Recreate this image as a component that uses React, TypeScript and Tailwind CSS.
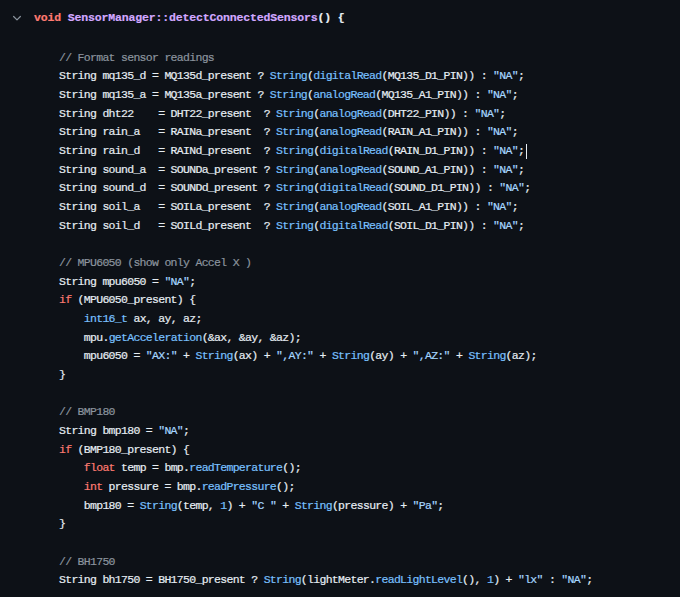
import React from "react";

type Seg = [string, string?];

const C = {
    kw: "text-[#ff7b72]",
    fn: "text-[#79c0ff]",
    str: "text-[#a5d6ff]",
    cm: "text-[#8b949e]",
    def: "text-[#d2a8ff]",
};

// helper: ternary sensor line
const sensorLine = (name: string, flag: string, read: string, pin: string): Seg[] => [
    [`String ${name}= ${flag}? `],
    ["String", C.fn],
    ["("],
    [read, C.fn],
    [`(${pin})) : `],
    ['"NA"', C.str],
    [";"],
];

const lines: { indent: number; segs: Seg[]; cursor?: boolean }[] = [
    { indent: 0, segs: [["// Format sensor readings", C.cm]] },
    { indent: 0, segs: sensorLine("mq135_d ", "MQ135d_present ", "digitalRead", "MQ135_D1_PIN") },
    { indent: 0, segs: sensorLine("mq135_a ", "MQ135a_present ", "analogRead", "MQ135_A1_PIN") },
    { indent: 0, segs: sensorLine("dht22    ", "DHT22_present  ", "analogRead", "DHT22_PIN") },
    { indent: 0, segs: sensorLine("rain_a   ", "RAINa_present  ", "analogRead", "RAIN_A1_PIN") },
    { indent: 0, segs: sensorLine("rain_d   ", "RAINd_present  ", "digitalRead", "RAIN_D1_PIN"), cursor: true },
    { indent: 0, segs: sensorLine("sound_a  ", "SOUNDa_present ", "analogRead", "SOUND_A1_PIN") },
    { indent: 0, segs: sensorLine("sound_d  ", "SOUNDd_present ", "digitalRead", "SOUND_D1_PIN") },
    { indent: 0, segs: sensorLine("soil_a   ", "SOILa_present  ", "analogRead", "SOIL_A1_PIN") },
    { indent: 0, segs: sensorLine("soil_d   ", "SOILd_present  ", "digitalRead", "SOIL_D1_PIN") },
    { indent: 0, segs: [] },
    { indent: 0, segs: [["// MPU6050 (show only Accel X )", C.cm]] },
    { indent: 0, segs: [["String mpu6050 = "], ['"NA"', C.str], [";"]] },
    { indent: 0, segs: [["if", C.kw], [" (MPU6050_present) {"]] },
    { indent: 1, segs: [["int16_t", C.fn], [" ax, ay, az;"]] },
    { indent: 1, segs: [["mpu."], ["getAcceleration", C.fn], ["(&ax, &ay, &az);"]] },
    {
        indent: 1,
        segs: [
            ["mpu6050 = "], ['"AX:"', C.str], [" + "], ["String", C.fn], ["(ax) + "],
            ['",AY:"', C.str], [" + "], ["String", C.fn], ["(ay) + "],
            ['",AZ:"', C.str], [" + "], ["String", C.fn], ["(az);"],
        ],
    },
    { indent: 0, segs: [["}"]] },
    { indent: 0, segs: [] },
    { indent: 0, segs: [["// BMP180", C.cm]] },
    { indent: 0, segs: [["String bmp180 = "], ['"NA"', C.str], [";"]] },
    { indent: 0, segs: [["if", C.kw], [" (BMP180_present) {"]] },
    { indent: 1, segs: [["float", C.kw], [" temp = bmp."], ["readTemperature", C.fn], ["();"]] },
    { indent: 1, segs: [["int", C.kw], [" pressure = bmp."], ["readPressure", C.fn], ["();"]] },
    {
        indent: 1,
        segs: [
            ["bmp180 = "], ["String", C.fn], ["(temp, "], ["1", C.fn], [") + "],
            ['"C "', C.str], [" + "], ["String", C.fn], ["(pressure) + "], ['"Pa"', C.str], [";"],
        ],
    },
    { indent: 0, segs: [["}"]] },
    { indent: 0, segs: [] },
    { indent: 0, segs: [["// BH1750", C.cm]] },
    {
        indent: 0,
        segs: [
            ["String bh1750 = BH1750_present ? "], ["String", C.fn], ["(lightMeter."],
            ["readLightLevel", C.fn], ["(), "], ["1", C.fn], [") + "], ['"lx"', C.str],
            [" : "], ['"NA"', C.str], [";"],
        ],
    },
];

export default function App() {
    return (
        <div
            className="w-[680px] h-[597px] overflow-hidden bg-[#0d1117] text-[#e6edf3] text-[11.5px] leading-[18.68px] tracking-[-0.7px] pt-[9px] [-webkit-text-stroke:0.2px_currentColor]"
            style={{ fontFamily: '"Liberation Mono", "DejaVu Sans Mono", monospace' }}
        >
            {/* function header */}
            <div className="flex items-center h-[18.68px]">
                <div className="w-[34px] flex items-center pl-[11px]">
                    <svg width="12" height="12" viewBox="0 0 16 16" fill="none" stroke="#8b949e" strokeWidth="1.6" strokeLinecap="round" strokeLinejoin="round">
                        <path d="M3.5 6 L8 10.5 L12.5 6" />
                    </svg>
                </div>
                <span className="whitespace-pre font-bold tracking-[-0.15px]">
                    <span className={C.kw}>void</span>{" "}
                    <span className={C.def}>SensorManager::detectConnectedSensors</span>() {"{"}
                </span>
            </div>

            {/* body */}
            <div className="mt-[21px] pl-[59px]">
                {lines.map((l, i) => (
                    <div key={i} className="h-[18.68px] whitespace-pre flex items-center">
                        {l.indent > 0 && <span>{"    "}</span>}
                        {l.segs.map(([t, cls], j) => (
                            <span key={j} className={cls}>{t}</span>
                        ))}
                        {l.cursor && <span className="inline-block w-[1px] h-[15px] bg-[#e6edf3] ml-[2px]"></span>}
                    </div>
                ))}
            </div>
        </div>
    );
}
